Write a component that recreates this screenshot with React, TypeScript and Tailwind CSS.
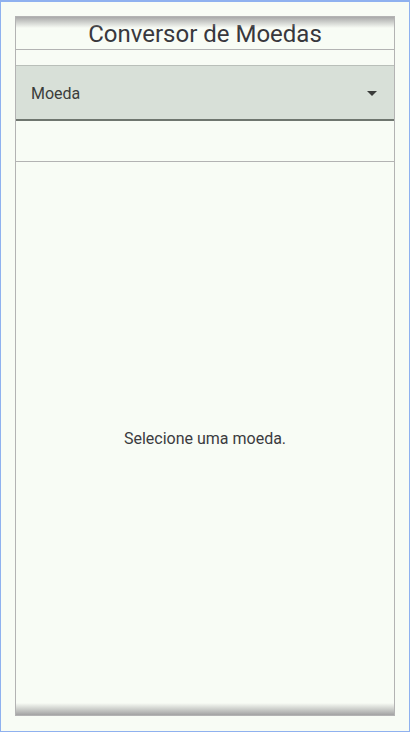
export default function App() {
  return (
    <div
      className="w-[410px] h-[732px] border-x border-b border-t-2 border-[#8fb1ef] bg-[#f8fcf5] px-[14px] pt-[14px] pb-[15px] text-[#38383d]"
      style={{ fontFamily: 'Roboto, "Noto Sans", sans-serif' }}
    >
      <div className="relative flex h-full flex-col border border-[#b3b3b3]">
        {/* top shade */}
        <div className="pointer-events-none absolute inset-x-0 top-0 h-[11px] bg-gradient-to-b from-[#a9a9a9] to-[#f8fcf5]/0" />

        {/* Header */}
        <div className="h-[33px] border-b border-[#b3b3b3] pt-[2px] text-center text-[24px] leading-[30px]">
          Conversor de Moedas
        </div>

        <div className="h-[15px]" />

        {/* Select */}
        <div className="flex h-[56px] items-center justify-between border-t border-b-2 border-t-[#b9bfb9] border-b-[#6f766f] bg-[#d8e0d8] pl-[15px] pr-[17px]">
          <span className="pt-[2px] text-[16px] text-[#3b3d3b]">Moeda</span>
          <svg width="10" height="5" viewBox="0 0 10 5" className="mt-[1px]">
            <path d="M0 0h10L5 5z" fill="#3a3c3a" />
          </svg>
        </div>

        {/* Input row */}
        <div className="h-[41px] border-b border-[#b3b3b3]" />

        {/* Content */}
        <div className="relative flex flex-1 items-center justify-center">
          <span className="text-[16px] text-[#3b3b40]">Selecione uma moeda.</span>
          <div className="pointer-events-none absolute inset-x-0 bottom-0 h-[12px] bg-gradient-to-b from-[#f8fcf5]/0 to-[#a3a3a3]" />
        </div>
      </div>
    </div>
  );
}
